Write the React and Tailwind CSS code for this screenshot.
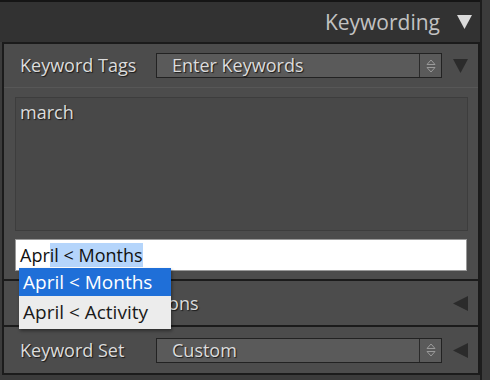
import React from "react";

const label = "text-[18px] text-[#dcdcdc] [text-shadow:1px_1px_1px_#1a1a1a]";

function Stepper() {
  return (
    <div className="w-[22px] h-full border-l border-[#2a2a2a] flex items-center justify-center">
      <svg width="10" height="14" viewBox="0 0 10 14">
        <path d="M5 1 L9 5.5 H1 Z" fill="none" stroke="#9a9a9a" strokeWidth="1" />
        <path d="M5 13 L9 8.5 H1 Z" fill="none" stroke="#9a9a9a" strokeWidth="1" />
      </svg>
    </div>
  );
}

function Select({ value }) {
  return (
    <div className="w-[286px] h-[25px] border border-[#222] bg-[#5a5a5a] flex items-center">
      <span className={"flex-1 pl-[15px] " + label}>{value}</span>
      <Stepper />
    </div>
  );
}

function TriDown({ color }) {
  return (
    <svg width="15" height="14" viewBox="0 0 15 14">
      <path d="M0 0 H15 L7.5 14 Z" fill={color} />
    </svg>
  );
}

function TriLeft() {
  return (
    <svg width="15" height="15" viewBox="0 0 15 15">
      <path d="M15 0 V15 L0 7.5 Z" fill="#2b2b2b" />
    </svg>
  );
}

export default function App() {
  return (
    <div className="w-[490px] h-[380px] bg-[#3b3b3b] overflow-hidden" style={{ fontFamily: '"Open Sans", "Liberation Sans", sans-serif' }}>
      <div className="w-[482px] h-full border-r-2 border-[#1d1d1d] flex flex-col">
        {/* header */}
        <div className="h-[42px] shrink-0 bg-[#323232] border-t-2 border-[#151515] flex items-center justify-end pr-[8px] gap-[17px]">
          <span className="text-[21px] text-[#c2c2c2] leading-none">Keywording</span>
          <TriDown color="#dadada" />
        </div>

        {/* panel */}
        <div className="ml-[2px] border-2 border-[#1b1b1b] bg-[#4c4c4c] flex flex-col relative">
          {/* keyword tags row */}
          <div className="h-[44px] flex items-center pl-[16px] border-b border-[#575757]">
            <span className={"w-[136px] " + label}>Keyword Tags</span>
            <Select value="Enter Keywords" />
            <div className="ml-[11px]"><TriDown color="#2b2b2b" /></div>
          </div>

          {/* tags area */}
          <div className="px-[11px] pt-[9px] pb-[8px] border-b-2 border-[#1b1b1b] flex flex-col gap-[8px]">
            <div className="h-[134px] w-[453px] bg-[#484848] border border-[#3d3d3d] px-[4px] py-[1px]">
              <span className={label}>march</span>
            </div>
            <div className="h-[32px] w-[452px] bg-white border border-[#999] flex items-center pl-[4px]">
              <span className="text-[18px] text-[#111]">
                Apr<span className="bg-[#b5d5fb]">il &lt; Months</span>
              </span>
            </div>
          </div>

          {/* suggestions */}
          <div className="h-[46px] flex items-center pl-[16px] pr-[10px] border-b-2 border-[#1b1b1b]">
            <span className={"flex-1 " + label}>Keyword Suggestions</span>
            <TriLeft />
          </div>

          {/* keyword set */}
          <div className="h-[46px] flex items-center pl-[16px]">
            <span className={"w-[136px] " + label}>Keyword Set</span>
            <Select value="Custom" />
            <div className="ml-[11px]"><TriLeft /></div>
          </div>

          {/* autocomplete dropdown */}
          <div className="absolute left-[15px] top-[224px] w-[152px] flex flex-col shadow-[1px_2px_3px_rgba(0,0,0,0.4)]">
            <div className="h-[28px] bg-[#1f6fd8] text-white text-[19px] flex items-center pl-[4px]">April &lt; Months</div>
            <div className="h-[33px] bg-[#ececec] text-[#1a1a1a] text-[19px] flex items-center pl-[4px]">April &lt; Activity</div>
          </div>
        </div>
      </div>
    </div>
  );
}
